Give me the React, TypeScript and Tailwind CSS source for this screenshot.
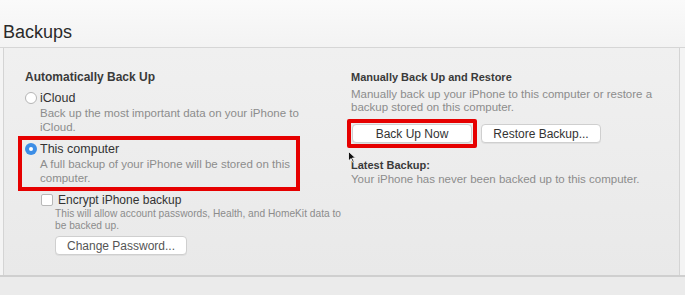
import React from 'react';

const font = { fontFamily: '"Liberation Sans", Arial, sans-serif' };

const Radio = ({ checked }: { checked?: boolean }) =>
  checked ? (
    <span className="flex h-[12px] w-[12px] items-center justify-center rounded-full bg-[#3d8ee6]">
      <span className="h-[4px] w-[4px] rounded-full bg-white" />
    </span>
  ) : (
    <span className="h-[12px] w-[12px] rounded-full border border-[#b5b5b5] bg-white" />
  );

const MacButton = ({ label, className = '' }: { label: string; className?: string }) => (
  <div
    className={`flex h-[19px] items-center justify-center rounded-[4px] border border-[#cfcfcf] bg-white text-[12px] text-[#333] shadow-[0_1px_0_rgba(0,0,0,0.05)] ${className}`}
  >
    {label}
  </div>
);

export default function App() {
  return (
    <div className="flex h-[295px] w-[685px] flex-col overflow-hidden bg-[#f4f4f4]" style={font}>
      {/* title */}
      <div className="h-[48px] border-b border-[#d6d6d6] bg-gradient-to-b from-[#fafafa] to-[#f3f3f3] pl-[3px] pt-[21px]">
        <h1 className="text-[18px] leading-[22px] text-[#2a2a2a]">Backups</h1>
      </div>

      {/* panel */}
      <div className="ml-[3px] mr-[5px] flex h-[227px] border-l border-r border-[#d4d4d4] bg-gradient-to-b from-[#f0f0f0] to-[#e9e9e9]">
        {/* left column */}
        <div className="w-[330px] pl-[21px] pt-[22px]">
          <div className="text-[12px] font-bold leading-[15px] text-[#3a3a3a]">Automatically Back Up</div>
          <div className="mt-[5px] flex items-center gap-[3px]">
            <Radio />
            <span className="text-[12.5px] leading-[16px] text-[#333]">iCloud</span>
          </div>
          <div className="pl-[15px] text-[11.5px] leading-[14px] text-[#8c8c8c]">
            Back up the most important data on your iPhone to
            <br />
            iCloud.
          </div>

          <div className="-ml-[7px] mt-[2px] w-[282px] border-[4px] border-[#e60000] pl-[3px] pt-[1px] pb-[2px]">
            <div className="flex items-center gap-[3px]">
              <Radio checked />
              <span className="text-[12.5px] leading-[16px] text-[#333]">This computer</span>
            </div>
            <div className="pl-[15px] text-[11.5px] leading-[14px] text-[#8c8c8c]">
              A full backup of your iPhone will be stored on this
              <br />
              computer.
            </div>
          </div>

          <div className="ml-[16px] mt-[2px] flex items-center gap-[5px]">
            <span className="h-[12px] w-[12px] rounded-[2px] border border-[#b8b8b8] bg-white" />
            <span className="text-[12px] leading-[14px] text-[#333]">Encrypt iPhone backup</span>
          </div>
          <div className="ml-[30px] mt-[1px] whitespace-nowrap text-[10.2px] leading-[12px] text-[#8c8c8c]">
            This will allow account passwords, Health, and HomeKit data to
            <br />
            be backed up.
          </div>
          <MacButton label="Change Password..." className="ml-[30px] mt-[4px] w-[132px] text-[#555]" />
        </div>

        {/* right column */}
        <div className="relative flex-1 pl-[17px] pt-[22px]">
          <div className="text-[11px] font-bold leading-[14px] text-[#3a3a3a]">Manually Back Up and Restore</div>
          <div className="mt-[4px] whitespace-nowrap text-[11.5px] leading-[13px] text-[#8c8c8c]">
            Manually back up your iPhone to this computer or restore a
            <br />
            backup stored on this computer.
          </div>
          <div className="mt-[5px] flex items-center gap-[4px]">
            <div className="-ml-[4px] rounded-[2px] border-[4px] border-[#e60000] p-[1px]">
              <MacButton label="Back Up Now" className="w-[120px]" />
            </div>
            <MacButton label="Restore Backup..." className="w-[120px]" />
          </div>
          <div className="mt-[10px] text-[11px] font-bold leading-[14px] text-[#3a3a3a]">Latest Backup:</div>
          <div className="text-[11.5px] leading-[14px] text-[#8c8c8c]">
            Your iPhone has never been backed up to this computer.
          </div>
          {/* mouse cursor */}
          <svg className="absolute left-[14px] top-[103px]" width="8" height="12" viewBox="0 0 8 12">
            <path d="M0.5 0.5 L0.5 10 L3 7.5 L4.8 11.3 L6.2 10.6 L4.4 7 L7.5 7 Z" fill="#111" stroke="#fff" strokeWidth="0.8" />
          </svg>
        </div>
      </div>

      {/* bottom strip */}
      <div className="flex-1 border-t-2 border-[#cfcfcf] bg-[#ebebeb]" />
    </div>
  );
}
